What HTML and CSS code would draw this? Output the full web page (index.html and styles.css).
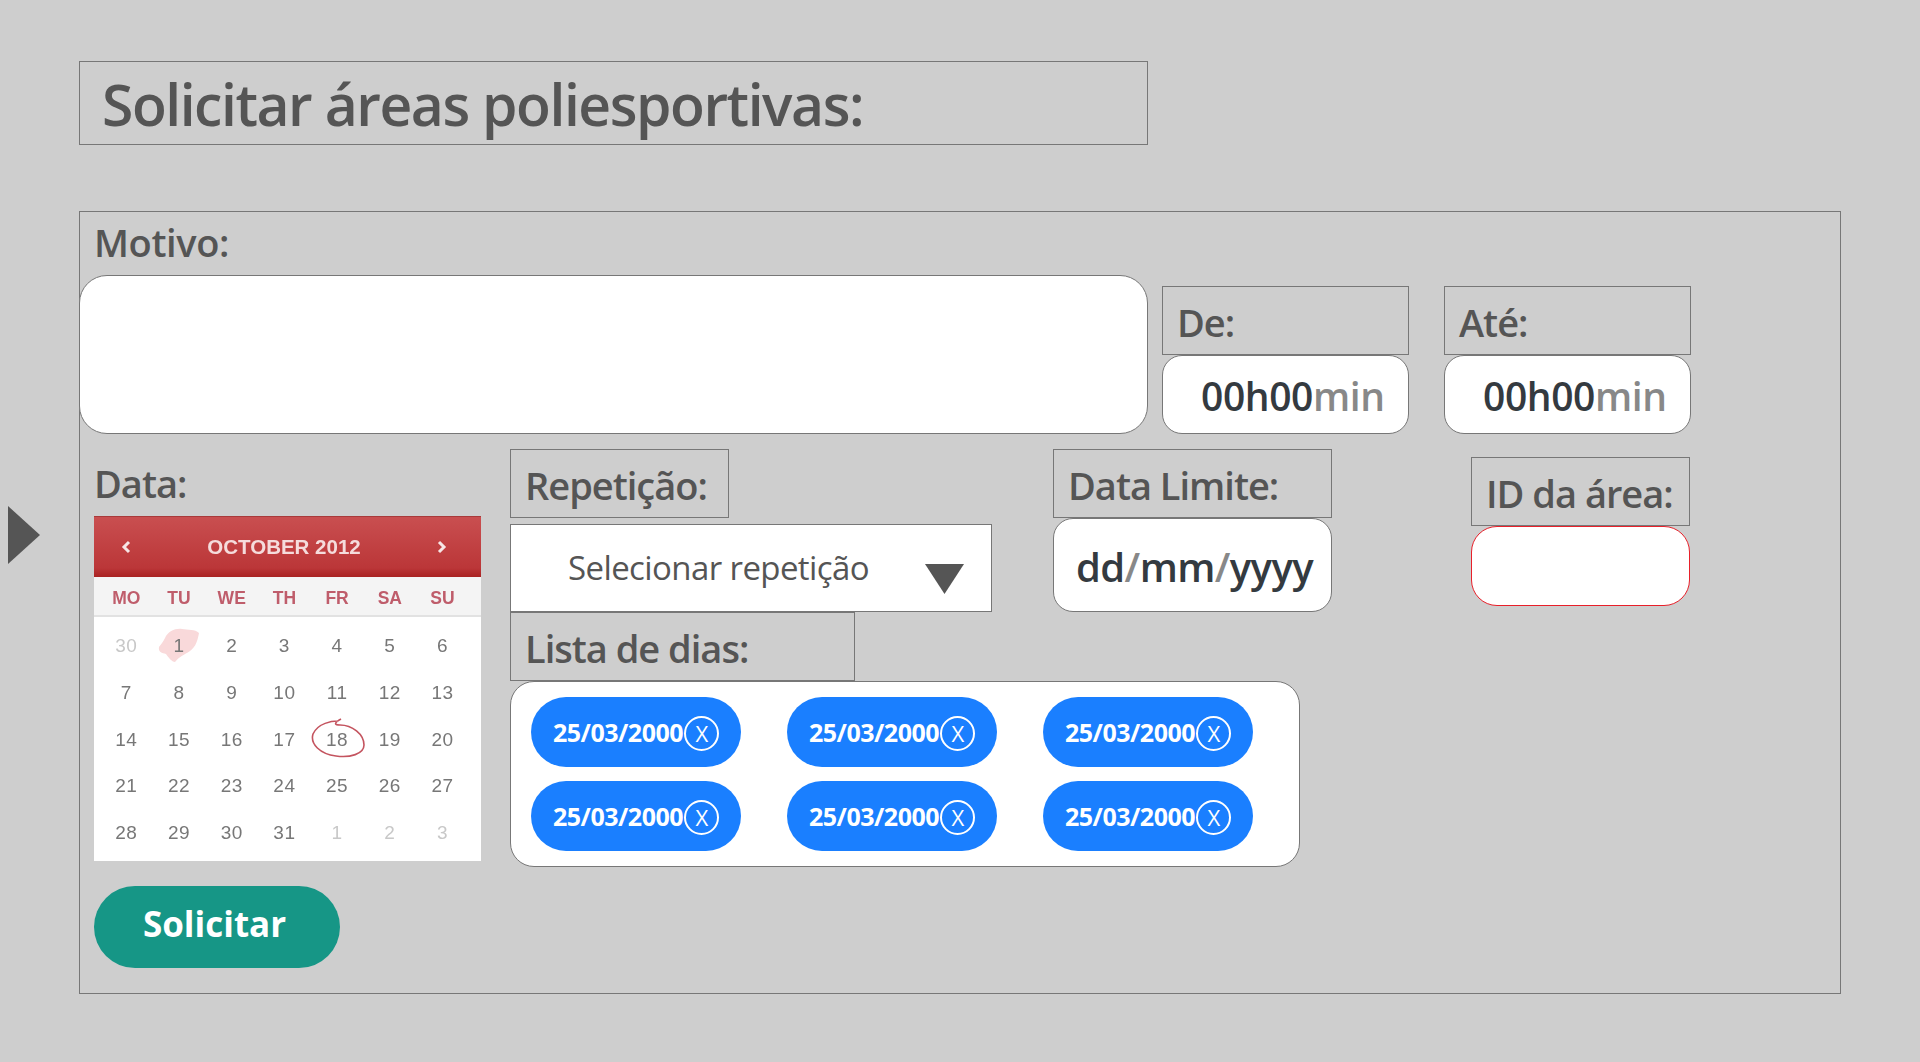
FILE: index.html
```html
<!DOCTYPE html>
<html lang="pt-BR">
<head>
<meta charset="utf-8">
<title>Solicitar áreas poliesportivas</title>
<link rel="stylesheet" href="styles.css">
</head>
<body>
<div class="page">
  <aside class="gutter">
    <svg class="nav-arrow" width="32" height="58" viewBox="0 0 32 58"><polygon points="0,0 32,29 0,58" fill="#555"/></svg>
  </aside>
  <main class="content">
    <h1 class="title">Solicitar áreas poliesportivas:</h1>
    <section class="panel">
      <div class="row-top">
        <div class="motivo">
          <div class="label-plain motivo-label">Motivo:</div>
          <div class="field field-motivo"></div>
        </div>
        <div class="time-col first">
          <div class="label-box time-label">De:</div>
          <div class="field field-time"><span class="dark">00h00</span><span class="muted">min</span></div>
        </div>
        <div class="time-col">
          <div class="label-box time-label">Até:</div>
          <div class="field field-time"><span class="dark">00h00</span><span class="muted">min</span></div>
        </div>
      </div>
      <div class="row-bottom">
        <div class="date-col">
          <div class="label-plain data-label">Data:</div>
          <div class="calendar">
            <div class="cal-head">
              <svg class="cal-nav" width="10" height="14" viewBox="0 0 10 14"><polyline points="8,2 3,7 8,12" fill="none" stroke="#f7e6e6" stroke-width="3"/></svg>
              <span class="cal-month">OCTOBER 2012</span>
              <svg class="cal-nav" width="10" height="14" viewBox="0 0 10 14"><polyline points="2,2 7,7 2,12" fill="none" stroke="#f7e6e6" stroke-width="3"/></svg>
            </div>
            <div class="cal-week"><span>MO</span><span>TU</span><span>WE</span><span>TH</span><span>FR</span><span>SA</span><span>SU</span></div>
            <div class="cal-days">
              <span class="off">30</span>
              <span class="day-mark">
                <svg class="blob" width="42" height="36" viewBox="0 0 42 36"><path d="M7 11 C10 4 18 1 24 2 C30 3 37 2 41 6 C40 12 38 20 32 24 C26 28 22 29 17 35 C14 35 10 30 8 27 C4 26 0 25 1 20 C3 17 5 15 7 11Z" fill="#f9d9da"/></svg>
                <b>1</b>
              </span>
              <span>2</span><span>3</span><span>4</span><span>5</span><span>6</span>
              <span>7</span><span>8</span><span>9</span><span>10</span><span>11</span><span>12</span><span>13</span>
              <span>14</span><span>15</span><span>16</span><span>17</span>
              <span class="day-mark">
                <svg class="ring" width="56" height="42" viewBox="0 0 56 42"><path d="M28 3 C22 3 8 5 3 16 C0 26 10 36 26 38 C40 40 54 36 54 27 C54 16 42 7 30 7 C26 7 22 6 31 1" fill="none" stroke="#c4545f" stroke-width="1.6"/></svg>
                <b>18</b>
              </span>
              <span>19</span><span>20</span>
              <span>21</span><span>22</span><span>23</span><span>24</span><span>25</span><span>26</span><span>27</span>
              <span>28</span><span>29</span><span>30</span><span>31</span><span class="off">1</span><span class="off">2</span><span class="off">3</span>
            </div>
          </div>
          <button class="submit" type="button">Solicitar</button>
        </div>
        <div class="right-col">
          <div class="right-top">
            <div class="rep-col">
              <div class="label-box rep-label">Repetição:</div>
              <div class="select">
                <span>Selecionar repetição</span>
                <svg class="select-arrow" width="39" height="30" viewBox="0 0 39 30"><polygon points="0,0 39,0 19.5,30" fill="#555"/></svg>
              </div>
            </div>
            <div class="limit-col">
              <div class="label-box limit-label">Data Limite:</div>
              <div class="field field-limit"><span class="dark">dd</span><span class="muted">/</span><span class="dark">mm</span><span class="muted">/</span><span class="dark">yyyy</span></div>
            </div>
            <div class="id-col">
              <div class="label-box id-label">ID da área:</div>
              <div class="field field-id"></div>
            </div>
          </div>
          <div class="label-box list-label">Lista de dias:</div>
          <div class="day-list">
            <div class="chip"><span>25/03/2000</span><span class="chip-x">X</span></div>
            <div class="chip"><span>25/03/2000</span><span class="chip-x">X</span></div>
            <div class="chip"><span>25/03/2000</span><span class="chip-x">X</span></div>
            <div class="chip"><span>25/03/2000</span><span class="chip-x">X</span></div>
            <div class="chip"><span>25/03/2000</span><span class="chip-x">X</span></div>
            <div class="chip"><span>25/03/2000</span><span class="chip-x">X</span></div>
          </div>
        </div>
      </div>
    </section>
  </main>
</div>
</body>
</html>
```
FILE: styles.css
```css
* { box-sizing: border-box; }
html, body { margin: 0; height: 100%; }
body {
  background: #cecece;
  font-family: "Open Sans", "Noto Sans", sans-serif;
  color: #555;
  overflow: hidden;
}
.page { display: flex; height: 1062px; }
.gutter { width: 79px; flex: none; padding: 506px 0 0 8px; }
.nav-arrow { display: block; }
.content { width: 1762px; flex: none; padding-top: 61px; }
.title {
  margin: 0 0 66px;
  width: 1069px;
  height: 84px;
  border: 1px solid #777;
  padding-left: 22px;
  font-size: 57px;
  font-weight: 600;
  line-height: 84px;
  letter-spacing: -1.45px;
  white-space: nowrap;
}
.panel { border: 1px solid #777; height: 783px; }
.row-top { display: flex; align-items: flex-end; height: 222px; }
.motivo { width: 1069px; margin-left: -1px; }
.label-plain, .label-box {
  font-size: 38px;
  font-weight: 600;
  letter-spacing: -1px;
  white-space: nowrap;
}
.motivo-label { height: 63px; padding-left: 15px; line-height: 60px; letter-spacing: -0.4px; }
.field { background: #fff; border: 1px solid #777; border-radius: 20px; }
.field-motivo { height: 159px; border-radius: 28px; }
.time-col { width: 247px; margin-left: 35px; }
.time-col.first { margin-left: 14px; }
.label-box { border: 1px solid #777; padding-left: 14px; height: 69px; line-height: 70px; }
.field-time {
  height: 79px;
  padding-left: 38px;
  font-size: 39px;
  font-weight: 600;
  line-height: 80px;
  letter-spacing: -0.4px;
}
.dark { color: #343a40; }
.muted { color: #888; }
.row-bottom { display: flex; padding-left: 14px; }
.date-col { width: 387px; flex: none; }
.data-label { height: 82px; padding-left: 0; line-height: 98px; }
.calendar { height: 345px; background: #fff; font-family: "Liberation Sans", sans-serif; color: #777; }
.cal-head {
  height: 61px;
  display: flex;
  align-items: center;
  justify-content: space-between;
  padding: 0 34px 0 27px;
  background: linear-gradient(#c94f50, #bb3638 85%, #a92222);
  border-top: 1px solid #a83a3a;
  color: #f5dcdc;
  font-size: 20.5px;
  font-weight: 700;
  filter: blur(0.4px);
}
.cal-week {
  height: 40px;
  display: grid;
  grid-template-columns: repeat(7, 52.7px);
  padding: 4px 0 0 6px;
  align-items: center;
  justify-items: center;
  background: #f4f4f4;
  border-bottom: 2px solid #e2e2e2;
  color: #bf5d6b;
  font-size: 17.5px;
  font-weight: 700;
  filter: blur(0.5px);
}
.cal-days {
  display: grid;
  grid-template-columns: repeat(7, 52.7px);
  grid-auto-rows: 46.7px;
  padding: 6px 0 0 6px;
  align-items: center;
  justify-items: center;
  font-size: 19px;
  letter-spacing: 0.5px;
  filter: blur(0.5px);
}
.off { color: #c8c8c8; }
.day-mark { position: relative; display: block; text-align: center; }
.day-mark b { position: relative; font-weight: 400; }
.blob { position: absolute; left: -15px; top: -8px; }
.ring { position: absolute; left: -16px; top: -11px; }
.submit {
  display: block;
  margin-top: 25px;
  width: 246px;
  height: 82px;
  padding: 0 5px 7px 0;
  border: 0;
  border-radius: 41px;
  background: #169686;
  color: #fff;
  font-family: "Open Sans", sans-serif;
  font-size: 35px;
  font-weight: 700;
}
.right-col { margin-left: 29px; padding-top: 15px; width: 1180px; flex: none; }
.right-top { display: flex; height: 163px; }
.rep-col { width: 482px; margin-right: 61px; }
.rep-label { width: 219px; }
.select {
  margin-top: 6px;
  height: 88px;
  background: #fff;
  border: 1px solid #777;
  display: flex;
  align-items: center;
  padding: 0 0 2px 57px;
  font-size: 33px;
  letter-spacing: -0.6px;
  position: relative;
}
.select-arrow { position: absolute; left: 414px; top: 39px; }
.limit-col { width: 279px; margin-right: 139px; }
.field-limit {
  height: 94px;
  padding-left: 22px;
  font-size: 40px;
  font-weight: 600;
  line-height: 96px;
  letter-spacing: -0.6px;
  white-space: nowrap;
}
.id-col { width: 219px; padding-top: 8px; }
.field-id { height: 80px; border-color: #e8202a; border-radius: 26px; }
.list-label { width: 345px; }
.day-list {
  width: 790px;
  height: 186px;
  background: #fff;
  border: 1px solid #777;
  border-radius: 24px;
  padding: 15px 0 0 20px;
  display: grid;
  grid-template-columns: repeat(3, 210px);
  grid-auto-rows: 70px;
  column-gap: 46px;
  row-gap: 14px;
}
.chip {
  display: flex;
  align-items: center;
  padding-left: 22px;
  background: #1a7fff;
  border-radius: 35px;
  color: #fff;
  font-size: 25px;
  font-weight: 700;
  letter-spacing: -0.5px;
  white-space: nowrap;
}
.chip-x {
  margin-left: 1px;
  margin-top: 3px;
  width: 35px;
  height: 35px;
  flex: none;
  border: 2.5px solid #fff;
  border-radius: 50%;
  font-size: 22px;
  font-weight: 400;
  line-height: 30px;
  text-align: center;
}
```
